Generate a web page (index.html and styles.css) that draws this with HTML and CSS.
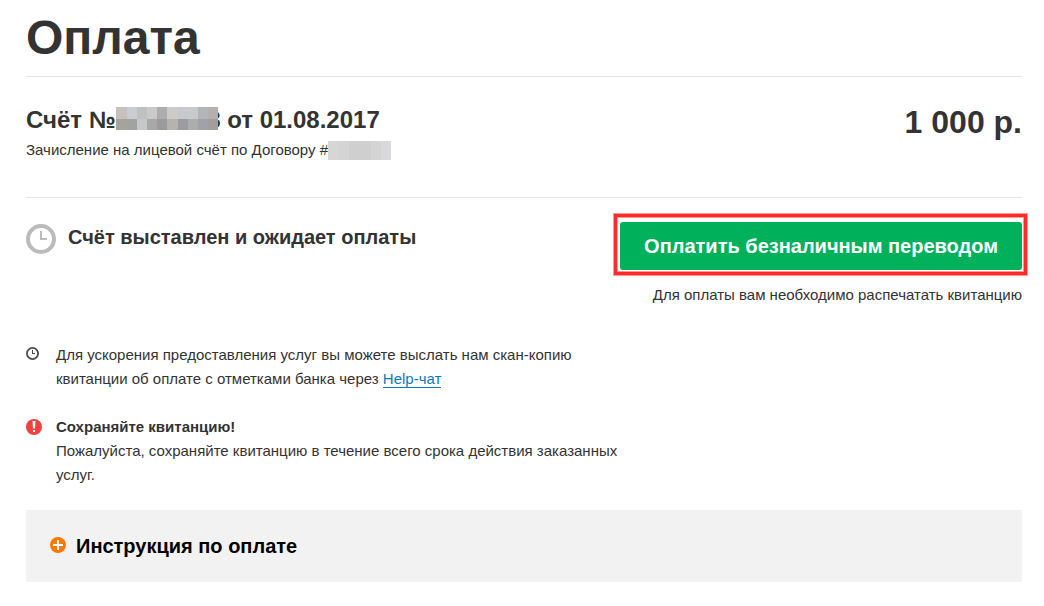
FILE: index.html
```html
<!DOCTYPE html>
<html lang="ru">
<head>
<meta charset="utf-8">
<meta name="viewport" content="width=device-width, initial-scale=1">
<title>Оплата</title>
<link rel="stylesheet" href="styles.css">
</head>
<body>
<main class="page">
  <h1 class="title">Оплата</h1>

  <section class="invoice">
    <div class="invoice-info">
      <h2 class="invoice-name">Счёт №<span class="number">8<svg class="mosaic" viewBox="0 0 102 23" preserveAspectRatio="none" aria-hidden="true" shape-rendering="crispEdges">
        <path fill="#c5c1bd" d="M0 0h11v12H0z"/><path fill="#cbccd1" d="M11 0h10v12H11z"/><path fill="#c0c0c0" d="M21 0h10v12H21z"/><path fill="#c9c9c9" d="M31 0h10v12H31z"/><path fill="#adadad" d="M41 0h10v12H41z"/><path fill="#cdcbc7" d="M51 0h11v12H51z"/><path fill="#c7c9cc" d="M62 0h10v12H62z"/><path fill="#c9c9c9" d="M72 0h10v12H72z"/><path fill="#b3b4b7" d="M82 0h10v12H82z"/><path fill="#b3b0ad" d="M92 0h10v12H92z"/>
        <path fill="#a6a39b" d="M0 12h11v11H0z"/><path fill="#a2a3a1" d="M11 12h10v11H11z"/><path fill="#c6c7c9" d="M21 12h10v11H21z"/><path fill="#a9a8a6" d="M31 12h10v11H31z"/><path fill="#9b9b9b" d="M41 12h10v11H41z"/><path fill="#b6b2ae" d="M51 12h11v11H51z"/><path fill="#9b9c9f" d="M62 12h10v11H62z"/><path fill="#adadad" d="M72 12h10v11H72z"/><path fill="#a1a2a9" d="M82 12h10v11H82z"/><path fill="#a19e9c" d="M92 12h10v11H92z"/>
      </svg></span> от 01.08.2017</h2>
      <p class="text contract">Зачисление на лицевой счёт по Договору # <span class="hidden-contract"></span></p>
    </div>
    <p class="price">1 000 р.</p>
  </section>

  <section class="payment">
    <div class="status">
      <svg class="status-icon" viewBox="0 0 30 30" aria-hidden="true"><circle cx="15" cy="15" r="13" fill="none" stroke="#bbb" stroke-width="4"/><path d="M14 7h2v7h5v2h-7z" fill="#bbb"/></svg>
      <h2 class="heading">Счёт выставлен и ожидает оплаты</h2>
    </div>
    <div class="action">
      <button class="pay" type="button">Оплатить безналичным переводом</button>
      <p class="text">Для оплаты вам необходимо распечатать квитанцию</p>
    </div>
  </section>

  <section class="notes">
    <div class="note">
      <svg class="note-icon" viewBox="0 0 16 16" aria-hidden="true"><circle cx="6.5" cy="6.5" r="5.6" fill="none" stroke="#4b4b4b" stroke-width="1.8"/><path d="M6 3h1v3h2v1H6z" fill="#4b4b4b"/></svg>
      <p class="text">Для ускорения предоставления услуг вы можете выслать нам скан-копию квитанции об оплате с отметками банка через <a class="link" href="#chat">Help-чат</a></p>
    </div>
    <div class="note">
      <svg class="note-icon" viewBox="0 0 16 16" aria-hidden="true"><circle cx="8" cy="8" r="8" fill="#ee4140"/><path d="M6.5 2h3L9 9.5H7zM7 11h2v2H7z" fill="#fff"/></svg>
      <p class="text"><strong>Сохраняйте квитанцию!</strong><br>Пожалуйста, сохраняйте квитанцию в течение всего срока действия заказанных услуг.</p>
    </div>
  </section>

  <button class="guide" type="button" aria-expanded="false">
    <svg class="guide-icon" viewBox="0 0 16 16" aria-hidden="true"><circle cx="8" cy="8" r="8" fill="#ff7800"/><path d="M7 3h2v4h4v2H9v4H7V9H3V7h4z" fill="#fff"/></svg>
    <span class="heading">Инструкция по оплате</span>
  </button>
</main>
</body>
</html>
```
FILE: styles.css
```css
* {
  box-sizing: border-box;
}

body {
  margin: 0;
  background: #fff;
  color: #333;
  font-family: "Liberation Sans", Arial, sans-serif;
}

h1, h2, p {
  margin: 0;
}

.page {
  padding: 10px 22px 24px 26px;
}

.title {
  padding-bottom: 10px;
  border-bottom: 1px solid #e5e5e5;
  font-size: 48px;
  line-height: 56px;
}

.invoice {
  display: flex;
  justify-content: space-between;
  gap: 24px;
  padding: 25px 0 35px;
  border-bottom: 1px solid #e5e5e5;
}

.invoice-info {
  padding-top: 2px;
}

.invoice-name {
  font-size: 24px;
  line-height: 32px;
}

.number {
  position: relative;
  display: inline-block;
  width: 105px;
  text-align: right;
}

.mosaic {
  position: absolute;
  top: 3px;
  left: 1px;
  width: 102px;
  height: 23px;
}

.text {
  font-size: 15px;
  line-height: 24px;
}

.contract {
  display: flex;
  align-items: center;
  margin-top: 2px;
}

.hidden-contract {
  width: 63px;
  height: 19px;
  background: linear-gradient(90deg, #d7d6d5 0 10px, #d4d4d4 10px 21px, #cfcfcf 21px 43px, #d4d4d4 43px 53px, #d9d9dc 53px);
}

.price {
  font-size: 32px;
  font-weight: bold;
  line-height: 40px;
}

.payment {
  display: flex;
  justify-content: space-between;
  gap: 24px;
  padding-top: 24px;
}

.status {
  display: flex;
  align-items: flex-start;
  gap: 12px;
  padding-top: 2px;
}

.status-icon {
  flex: none;
  width: 30px;
  height: 30px;
}

.heading {
  font-size: 20px;
  font-weight: bold;
  line-height: 24px;
}

.status .heading {
  padding-top: 1px;
}

.action {
  display: flex;
  flex-direction: column;
  align-items: flex-end;
  gap: 13px;
}

.pay {
  position: relative;
  padding: 12px 24px;
  border: 0;
  border-radius: 3px;
  background: #00b05b;
  color: #fff;
  font-family: inherit;
  font-size: 20px;
  font-weight: bold;
  line-height: 24px;
  cursor: pointer;
}

.pay::after {
  position: absolute;
  inset: -8px -5px -5px -6px;
  border: 3px solid #ff2a2a;
  box-shadow: 0 0 0 1px #ff9a9a, inset 0 0 0 1px #ff9a9a;
  content: "";
}

.notes {
  display: grid;
  gap: 24px;
  width: 60%;
  padding: 36px 0 23px;
}

.note {
  display: flex;
  gap: 14px;
}

.note-icon {
  flex: none;
  width: 16px;
  height: 16px;
  margin-top: 4px;
}

.link {
  border-bottom: 1px solid #0e7ab8;
  color: #0e7ab8;
  line-height: 16px;
  text-decoration: none;
}

.guide {
  display: flex;
  align-items: center;
  gap: 10px;
  width: 100%;
  padding: 24px;
  border: 0;
  background: #f2f2f2;
  color: #000;
  font-family: inherit;
  text-align: left;
  cursor: pointer;
}

.guide-icon {
  flex: none;
  width: 16px;
  height: 16px;
  margin-bottom: 2px;
}
```
